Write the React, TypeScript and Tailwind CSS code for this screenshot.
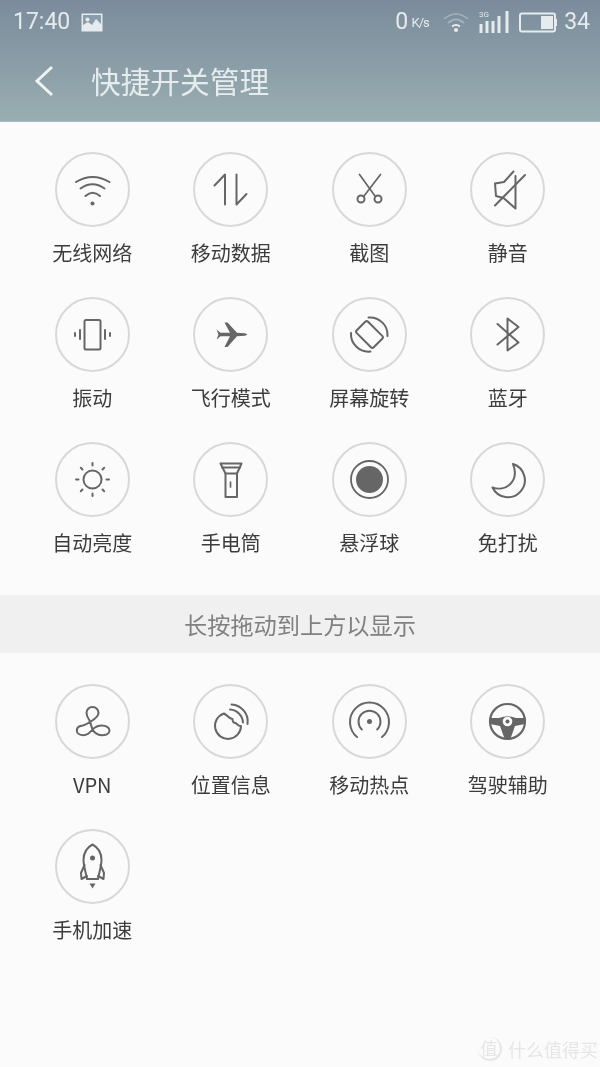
import React from 'react';

type Item = { label: string; icon: React.ReactNode };

const CJK = { fontFamily: '"Noto Sans CJK SC", "Noto Sans", sans-serif' };

// All icons share a 75x75 box, same as the round button
const line = { fill: 'none', stroke: '#666', strokeWidth: 2, strokeLinecap: 'round', strokeLinejoin: 'round' } as const;
const thin = { ...line, strokeWidth: 1.7 };

const firstGroup: Item[] = [
  {
    label: '无线网络',
    icon: (
      <>
        <path {...line} d="M21 30 Q37.5 20 54.5 30" />
        <path {...line} d="M25.5 36.5 Q37.5 28 49.5 36.5" />
        <path {...line} d="M30.5 44 Q37.5 37.5 45 44" />
        <circle cx="37.5" cy="51.5" r="2" fill="#666" />
      </>
    ),
  },
  {
    label: '移动数据',
    icon: (
      <>
        <path {...line} d="M21.5 33.5 L32 22.5 V52.5" />
        <path {...line} d="M43.5 22.5 V52.5 L53.5 42" />
      </>
    ),
  },
  {
    label: '截图',
    icon: (
      <>
        <path {...thin} d="M27.5 22.5 L43 44" />
        <path {...thin} d="M48.5 22.5 L32 44" />
        <circle {...line} cx="29" cy="47" r="3.5" />
        <circle {...line} cx="46" cy="47" r="3.5" />
      </>
    ),
  },
  {
    label: '静音',
    icon: (
      <>
        <path {...line} d="M43.5 19.5 L34 30 L25 31.5 L26 44 L33.5 46 L45.5 56.5 V24" />
        <path {...line} d="M55 23 L25 53.5" />
      </>
    ),
  },
  {
    label: '振动',
    icon: (
      <>
        <rect {...line} x="29.5" y="23" width="16" height="29.5" rx="1.5" />
        <path {...line} d="M25 33 V42 M50 33 V42 M20 36 V39 M55 36 V39" />
      </>
    ),
  },
  {
    label: '飞行模式',
    icon: (
      <path
        fill="#666"
        d="M54.5 37.5 L52 36.2 L44 35.8 L34.5 25.5 H31.5 L37 35.8 H27.5 L23.5 32.5 L25.5 37.5 L23.5 42.5 L27.5 39.2 H37 L31.5 50 H34.5 L44 39.2 L52 38.8 Z"
      />
    ),
  },
  {
    label: '屏幕旋转',
    icon: (
      <>
        <rect {...line} x="29.5" y="25.5" width="16" height="24" rx="2" transform="rotate(-45 37.5 37.5)" />
        <path {...line} d="M36.5 20.5 A17.5 17.5 0 0 1 55.5 39" />
        <path {...line} d="M19 36 A17.5 17.5 0 0 0 38.5 54.5" />
      </>
    ),
  },
  {
    label: '蓝牙',
    icon: <path {...line} d="M27.5 27 L48.5 45.5 L37.5 53.5 V21.5 L48.5 30 L27.5 47.5" />,
  },
  {
    label: '自动亮度',
    icon: (
      <>
        <circle {...line} cx="37.5" cy="37.5" r="9" />
        <path
          {...line}
          d="M37.5 21 V23.5 M37.5 51.5 V54 M21 37.5 H23.5 M51.5 37.5 H54 M25.8 25.8 L27.5 27.5 M47.5 47.5 L49.2 49.2 M25.8 49.2 L27.5 47.5 M47.5 27.5 L49.2 25.8"
        />
      </>
    ),
  },
  {
    label: '手电筒',
    icon: (
      <>
        <path {...line} d="M27.5 21.5 H48.5 L44 31.5 V55 H32.5 V31.5 Z" />
        <path {...line} d="M29 25.5 H47 M32.5 31.5 H44" />
        <path {...thin} d="M37.5 40 V45" />
      </>
    ),
  },
  {
    label: '悬浮球',
    icon: (
      <>
        <circle fill="none" stroke="#666" strokeWidth="1.8" cx="37.5" cy="37.5" r="18.5" />
        <circle fill="#666" cx="37.5" cy="37.5" r="13.5" />
      </>
    ),
  },
  {
    label: '免打扰',
    icon: <path {...line} d="M43 22 A17 17 0 1 1 22.5 45.5 C35 50 50 40 43 22 Z" />,
  },
];

const secondGroup: Item[] = [
  {
    label: 'VPN',
    icon: (
      <path
        {...line}
        d="M37.5 23 C41 23 43.5 25.8 43.5 29 C43.5 33 39 35.5 35 38 C32 40 30 41 28 41.5 C24.5 41.8 21.8 43.5 21.8 46.5 C21.8 49.5 25 51.3 28.5 51.3 C32.5 51.3 35.5 48 37.5 45.5 C40 43 43 41.5 46.8 41.5 C51 41.5 54.5 43.5 54.5 46.5 C54.5 49.5 51 51.3 46.8 51.3 C42 51.3 38.5 47.5 37.5 45.5 C36.5 43 35.5 38.5 34.5 36.5 C33 34 31.5 32 31.5 29 C31.5 25.8 34 23 37.5 23 Z"
      />
    ),
  },
  {
    label: '位置信息',
    icon: (
      <>
        <path
          {...line}
          d="M31 29.5 A13 13 0 1 0 48 42 C45 42.5 44 39.5 42.5 39 C40 39 39.5 36.5 39.5 35 C36.5 35 34 31 31 29.5 Z"
        />
        <path {...line} d="M37 25.5 A14 14 0 0 1 50 38.5" />
        <path {...line} d="M38.5 20.5 A17 17 0 0 1 54.5 40" />
      </>
    ),
  },
  {
    label: '移动热点',
    icon: (
      <>
        <circle cx="37.5" cy="37.5" r="2.5" fill="#666" />
        <path {...line} d="M29.8 45.5 A11 11 0 1 1 45.2 45.5" />
        <path {...line} d="M25 53 A19.5 19.5 0 1 1 50 53" />
      </>
    ),
  },
  {
    label: '驾驶辅助',
    icon: (
      <>
        <circle fill="none" stroke="#666" strokeWidth="2.2" cx="37.5" cy="37.5" r="17.5" />
        <path fill="#666" d="M20.5 34 H29 Q37.5 30.5 46 34 H54.5 L55 40 L45 42 L40.5 54.5 H34.5 L30 42 L20 40 Z" />
        <circle cx="37.5" cy="37.5" r="4.8" fill="#fbfbfb" />
        <circle cx="37.5" cy="37.5" r="2" fill="#666" />
      </>
    ),
  },
  {
    label: '手机加速',
    icon: (
      <>
        <path
          {...line}
          d="M37.5 15.5 C31 19 28.5 25 28.5 31 C28.5 37 31 44 32 50 H43 C44 44 46.5 37 46.5 31 C46.5 25 44 19 37.5 15.5 Z"
        />
        <path {...line} d="M29.5 36 L26 44 L26.5 50 L32 47 M45.5 36 L49 44 L48.5 50 L43 47" />
        <circle cx="37.5" cy="29" r="2.5" fill="#666" />
        <path fill="#666" d="M34.5 54.5 H40.5 L37.5 59.5 Z" />
      </>
    ),
  },
];

function ToggleButton({ label, icon }: Item) {
  return (
    <div className="flex flex-col items-center">
      <div className="w-[75px] h-[75px] rounded-full border-2 border-[#d8d8d8]">
        {/* border eats 2px each side, so pull the drawing back out */}
        <svg viewBox="0 0 75 75" className="w-[75px] h-[75px] -m-[2px] block">
          {icon}
        </svg>
      </div>
      <span className="mt-[11px] h-[30px] leading-[30px] text-[20px] text-[#3c3c3c] whitespace-nowrap" style={CJK}>
        {label}
      </span>
    </div>
  );
}

function StatusBar() {
  return (
    <div className="h-[44px] flex items-center justify-between pl-[13px] pr-[10px] text-[23px] text-[#e6ebed]" style={{ fontFamily: 'Roboto, sans-serif' }}>
      <div className="flex items-center gap-[11px]">
        <span>17:40</span>
        <svg width="22" height="19" viewBox="0 0 22 19">
          <rect x="0.5" y="0.5" width="21" height="18" fill="#e6ebed" />
          <rect x="2" y="2" width="18" height="15" fill="#8b9cab" />
          <circle cx="6.5" cy="6.5" r="2" fill="#e6ebed" />
          <path fill="#e6ebed" d="M2 17 V12 L7 9 L11 12 L15 6 L20 11 V17 Z" />
        </svg>
      </div>
      <div className="flex items-center">
        <span>0</span>
        <span className="ml-[3px] mr-[14px] text-[13px] leading-[13px] w-[18px] tracking-[-1px] text-center">K/s</span>
        <svg width="26" height="20" viewBox="0 0 26 20" className="mr-[10px]">
          <path d="M1 7 Q13 -3 25 7" fill="none" stroke="#a3b2bd" strokeWidth="1.6" />
          <path d="M5 11 Q13 4 21 11" fill="none" stroke="#a3b2bd" strokeWidth="2" />
          <path d="M9 14.5 Q13 11.5 17 14.5" fill="none" stroke="#e6ebed" strokeWidth="2" />
          <circle cx="13" cy="18" r="2" fill="#e6ebed" />
        </svg>
        <svg width="32" height="24" viewBox="0 0 32 24" className="mr-[8px]">
          <text x="0" y="7" fontSize="8" fill="#e6ebed" fontFamily="Roboto, sans-serif">3G</text>
          <path d="M2 14 V23 M8 11 V23 M14 11 V23 M20 6 V23 M28 1 V23" stroke="#e6ebed" strokeWidth="3" fill="none" />
        </svg>
        <svg width="38" height="21" viewBox="0 0 38 21" className="mr-[7px]">
          <rect x="1" y="1.5" width="35" height="18" rx="2" fill="none" stroke="#e6ebed" strokeWidth="2" />
          <rect x="22" y="4" width="12" height="13" fill="#e6ebed" />
          <rect x="36.5" y="7" width="1.5" height="7" fill="#e6ebed" />
        </svg>
        <span>34</span>
      </div>
    </div>
  );
}

export default function App() {
  return (
    <div className="relative w-[600px] h-[1067px] overflow-hidden bg-[#fbfbfb] blur-[0.5px]">
      <div className="h-[122px] bg-gradient-to-b from-[#7b8b9c] to-[#99aeb1] border-b border-[#a9b9bb]">
        <StatusBar />
        <div className="flex items-center h-[74px] pl-[34px]">
          <svg width="20" height="32" viewBox="0 0 20 32" className="mr-[37px]">
            <path d="M18 2 L3 16 L18 30" fill="none" stroke="#eef2f3" strokeWidth="3" />
          </svg>
          <h1 className="text-[29.7px] leading-none text-[#e6ecee]" style={CJK}>
            快捷开关管理
          </h1>
        </div>
      </div>

      <div className="grid grid-cols-4 gap-y-[29px] px-[23px] pt-[30px] pb-[37px]">
        {firstGroup.map((item) => (
          <ToggleButton key={item.label} {...item} />
        ))}
      </div>

      <div className="h-[58px] flex items-center justify-center bg-[#f0f0f0] text-[23.2px] text-[#808080]" style={CJK}>
        长按拖动到上方以显示
      </div>

      <div className="grid grid-cols-4 gap-y-[29px] px-[23px] pt-[31px]">
        {secondGroup.map((item) => (
          <ToggleButton key={item.label} {...item} />
        ))}
      </div>

      {/* site watermark, lies over the page */}
      <div className="absolute right-[2px] bottom-[6px] flex items-center gap-[6px] text-[18px] leading-[22px] text-[#e6e6e6]" style={CJK}>
        <span className="w-[24px] h-[24px] rounded-full border-r-2 border-b-2 border-[#e6e6e6] flex items-center justify-center text-[17px]">值</span>
        <span>什么值得买</span>
      </div>
    </div>
  );
}
